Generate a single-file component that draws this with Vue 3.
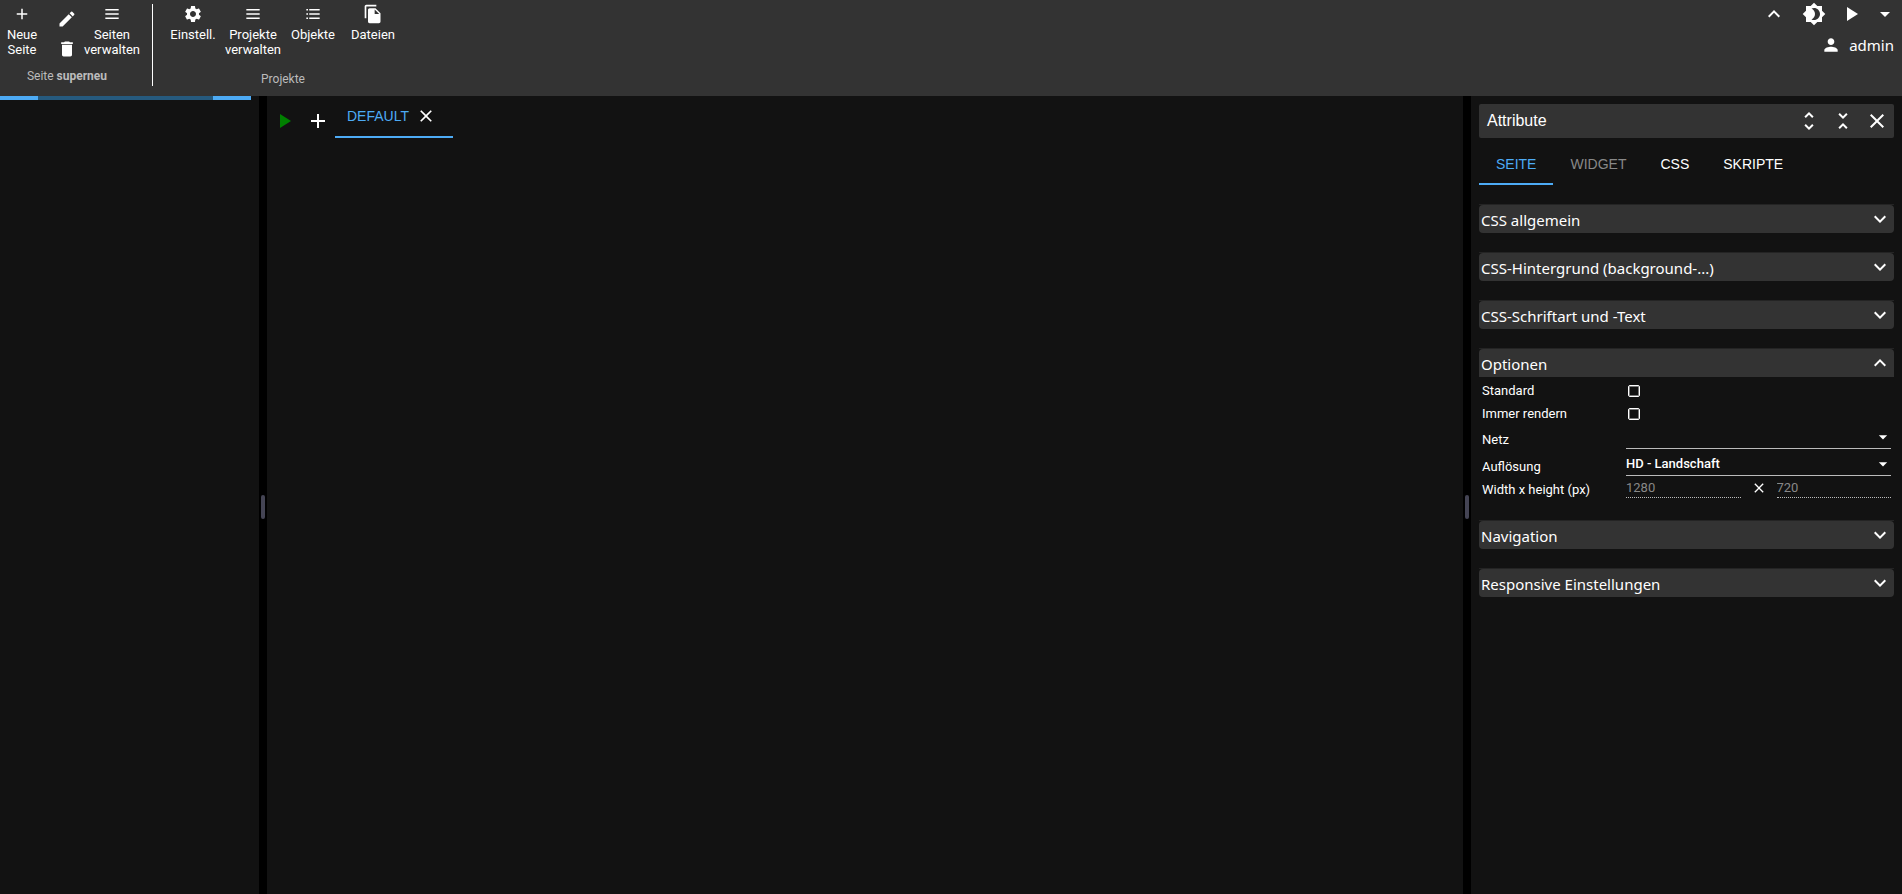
<script setup>
import { ref, reactive } from 'vue'

const icons = {
  add: 'M19 13h-6v6h-2v-6H5v-2h6V5h2v6h6v2z',
  edit: 'M3 17.25V21h3.75L17.81 9.94l-3.75-3.75L3 17.25zM20.71 7.04c.39-.39.39-1.02 0-1.41l-2.34-2.34a.9959.9959 0 0 0-1.41 0l-1.83 1.83 3.75 3.75 1.83-1.83z',
  trash: 'M6 19c0 1.1.9 2 2 2h8c1.1 0 2-.9 2-2V7H6v12zM19 4h-3.5l-1-1h-5l-1 1H5v2h14V4z',
  menu: 'M4 18h16v-1.8H4V18zm0-5.1h16v-1.8H4v1.8zM4 6v1.8h16V6H4z',
  list: 'M4 7.8h2V6H4v1.8zm0 5.1h2v-1.8H4v1.8zM4 18h2v-1.8H4V18zm3.500 0H20v-1.8H7.500V18zm0-5.1H20v-1.8H7.500v1.8zm0-6.9v1.8H20V6H7.500z',
  gear: 'M19.14 12.94c.04-.3.06-.61.06-.94 0-.32-.02-.64-.07-.94l2.03-1.58c.18-.14.23-.41.12-.61l-1.92-3.32c-.12-.22-.37-.29-.59-.22l-2.39.96c-.5-.38-1.03-.7-1.62-.94l-.36-2.54c-.04-.24-.24-.41-.48-.41h-3.84c-.24 0-.43.17-.47.41l-.36 2.54c-.59.24-1.13.57-1.62.94l-2.39-.96c-.22-.08-.47 0-.59.22L2.74 8.87c-.12.21-.08.47.12.61l2.03 1.58c-.05.3-.09.63-.09.94s.02.64.07.94l-2.03 1.58c-.18.14-.23.41-.12.61l1.92 3.32c.12.22.37.29.59.22l2.39-.96c.5.38 1.03.7 1.62.94l.36 2.54c.05.24.24.41.48.41h3.84c.24 0 .44-.17.47-.41l.36-2.54c.59-.24 1.13-.56 1.62-.94l2.39.96c.22.08.47 0 .59-.22l1.92-3.32c.12-.22.07-.47-.12-.61l-2.01-1.58zM12 15.6c-1.98 0-3.6-1.62-3.6-3.6s1.62-3.6 3.6-3.6 3.6 1.62 3.6 3.6-1.62 3.6-3.6 3.6z',
  files: 'M16 1H4c-1.1 0-2 .9-2 2v14h2V3h12V1zm-1 4 6 6v10c0 1.1-.9 2-2 2H7.99C6.89 23 6 22.1 6 21l.01-14c0-1.1.89-2 1.99-2h7zm-1 7h5.5L14 6.5V12z',
  up: 'M12 8l-6 6 1.41 1.41L12 10.83l4.59 4.58L18 14z',
  down: 'M16.59 8.59 12 13.17 7.41 8.59 6 10l6 6 6-6z',
  theme: 'M20 8.69V4h-4.69L12 .69 8.69 4H4v4.69L.69 12 4 15.31V20h4.69L12 23.31 15.31 20H20v-4.69L23.31 12 20 8.69zM12 18c-.89 0-1.74-.2-2.5-.55C11.56 16.5 13 14.42 13 12s-1.44-4.5-3.5-5.45C10.26 6.2 11.11 6 12 6c3.31 0 6 2.69 6 6s-2.69 6-6 6z',
  play: 'M8 5v14l11-7z',
  drop: 'M7 10l5 5 5-5z',
  user: 'M12 12c2.21 0 4-1.79 4-4s-1.79-4-4-4-4 1.79-4 4 1.79 4 4 4zm0 2c-2.67 0-8 1.34-8 4v2h16v-2c0-2.66-5.33-4-8-4z',
  close: 'M19 6.41 17.59 5 12 10.59 6.41 5 5 6.41 10.59 12 5 17.59 6.41 19 12 13.41 17.59 19 19 17.59 13.41 12z',
  unfoldMore: 'M12 5.83 15.17 9l1.41-1.41L12 3 7.41 7.59 8.83 9 12 5.83zm0 12.34L8.83 15l-1.41 1.41L12 21l4.59-4.59L15.17 15 12 18.17z',
  unfoldLess: 'M7.41 18.59 8.83 20 12 16.83 15.17 20l1.41-1.41L12 14l-4.59 4.59zm9.18-13.18L15.17 4 12 7.17 8.83 4 7.41 5.41 12 10l4.59-4.59z',
}

const projectTools = [
  { icon: 'gear', label: 'Einstell.' },
  { icon: 'menu', label: 'Projekte verwalten' },
  { icon: 'list', label: 'Objekte' },
  { icon: 'files', label: 'Dateien' },
]

const tabs = [
  { id: 'page', label: 'SEITE' },
  { id: 'widget', label: 'WIDGET', disabled: true },
  { id: 'css', label: 'CSS' },
  { id: 'scripts', label: 'SKRIPTE' },
]
const activeTab = ref('page')

const sections = reactive([
  { id: 'common', label: 'CSS allgemein', open: false },
  { id: 'background', label: 'CSS-Hintergrund (background-...)', open: false },
  { id: 'font', label: 'CSS-Schriftart und -Text', open: false },
  { id: 'options', label: 'Optionen', open: true },
  { id: 'navigation', label: 'Navigation', open: false },
  { id: 'responsive', label: 'Responsive Einstellungen', open: false },
])

const page = reactive({
  isDefault: false,
  alwaysRender: false,
  grid: '',
  resolution: 'hd',
  width: '1280',
  height: '720',
})

function setAll(open) {
  sections.forEach((s) => { s.open = open })
}
</script>

<template>
  <div class="editor">
    <header class="toolbar">
      <div class="group pages">
        <div class="tools">
          <button class="tool new">
            <svg class="i18" viewBox="0 0 24 24"><path :d="icons.add" /></svg>
            <span>Neue Seite</span>
          </button>
          <div class="stack">
            <button aria-label="Umbenennen"><svg class="i20" viewBox="0 0 24 24"><path :d="icons.edit" /></svg></button>
            <button aria-label="Löschen"><svg class="i20" viewBox="0 0 24 24"><path :d="icons.trash" /></svg></button>
          </div>
          <button class="tool">
            <svg class="i20" viewBox="0 0 24 24"><path :d="icons.menu" /></svg>
            <span>Seiten verwalten</span>
          </button>
        </div>
        <div class="caption">Seite <b>superneu</b></div>
      </div>
      <div class="group projects">
        <div class="tools">
          <button v-for="t in projectTools" :key="t.label" class="tool">
            <svg class="i20" viewBox="0 0 24 24"><path :d="icons[t.icon]" /></svg>
            <span>{{ t.label }}</span>
          </button>
        </div>
        <div class="caption">Projekte</div>
      </div>

      <div class="account">
        <div class="actions">
          <button class="collapse" aria-label="Einklappen"><svg viewBox="0 0 24 24"><path :d="icons.up" /></svg></button>
          <button class="theme" aria-label="Thema"><svg viewBox="0 0 24 24"><path :d="icons.theme" /></svg></button>
          <button aria-label="Starten"><svg viewBox="0 0 24 24"><path :d="icons.play" /></svg></button>
          <button aria-label="Mehr"><svg viewBox="0 0 24 24"><path :d="icons.drop" /></svg></button>
        </div>
        <div class="user">
          <svg class="i20" viewBox="0 0 24 24"><path :d="icons.user" /></svg>
          <span>admin</span>
        </div>
      </div>
    </header>

    <main class="workspace">
      <aside class="palette">
        <div class="progress"><i></i><i></i></div>
      </aside>
      <div class="gutter"><i></i></div>

      <section class="canvas">
        <div class="view-bar">
          <button class="run" aria-label="Ansicht starten"><svg viewBox="0 0 24 24"><path :d="icons.play" /></svg></button>
          <button aria-label="Ansicht öffnen"><svg viewBox="0 0 24 24"><path :d="icons.add" /></svg></button>
          <div class="view-tab">
            <button class="view-name">DEFAULT</button>
            <button aria-label="Schließen"><svg class="i20" viewBox="0 0 24 24"><path :d="icons.close" /></svg></button>
          </div>
        </div>
      </section>
      <div class="gutter"><i></i></div>

      <aside class="attributes">
        <div class="panel-title">
          <span>Attribute</span>
          <button aria-label="Alle öffnen" @click="setAll(true)"><svg viewBox="0 0 24 24"><path :d="icons.unfoldMore" /></svg></button>
          <button aria-label="Alle schließen" @click="setAll(false)"><svg viewBox="0 0 24 24"><path :d="icons.unfoldLess" /></svg></button>
          <button aria-label="Ausblenden"><svg viewBox="0 0 24 24"><path :d="icons.close" /></svg></button>
        </div>

        <nav class="tabs">
          <button v-for="t in tabs" :key="t.id" :disabled="t.disabled"
            :class="{ active: activeTab === t.id }" @click="activeTab = t.id">{{ t.label }}</button>
        </nav>

        <section v-for="s in sections" :key="s.id" class="section" :class="{ open: s.open }">
          <button class="section-head" @click="s.open = !s.open">
            <span>{{ s.label }}</span>
            <svg viewBox="0 0 24 24"><path :d="s.open ? icons.up : icons.down" /></svg>
          </button>
          <div v-if="s.open && s.id === 'options'" class="fields">
            <div class="field">
              <label for="isDefault">Standard</label>
              <input id="isDefault" v-model="page.isDefault" type="checkbox" />
            </div>
            <div class="field">
              <label for="alwaysRender">Immer rendern</label>
              <input id="alwaysRender" v-model="page.alwaysRender" type="checkbox" />
            </div>
            <div class="field line">
              <label for="grid">Netz</label>
              <div class="select">
                <select id="grid" v-model="page.grid"><option value=""></option></select>
                <svg class="i20" viewBox="0 0 24 24"><path :d="icons.drop" /></svg>
              </div>
            </div>
            <div class="field line">
              <label for="resolution">Auflösung</label>
              <div class="select">
                <select id="resolution" v-model="page.resolution"><option value="hd">HD - Landschaft</option></select>
                <svg class="i20" viewBox="0 0 24 24"><path :d="icons.drop" /></svg>
              </div>
            </div>
            <div class="field dimensions">
              <label for="width">Width x height (px)</label>
              <div class="size">
                <input id="width" v-model="page.width" type="text" disabled />
                <svg class="i16" viewBox="0 0 24 24"><path :d="icons.close" /></svg>
                <input v-model="page.height" type="text" aria-label="Height" disabled />
              </div>
            </div>
          </div>
        </section>
      </aside>
    </main>
  </div>
</template>

<style>
body {
  background: #121212;
}
</style>

<style scoped>
.editor {
  min-height: 100vh;
  display: flex;
  flex-direction: column;
  background: #121212;
  color: #fff;
  font-family: Roboto, "Liberation Sans", sans-serif;
}
.editor *, .editor { box-sizing: border-box; }

button {
  display: block;
  padding: 0;
  border: 0;
  background: none;
  color: inherit;
  font: inherit;
  cursor: pointer;
}
svg {
  display: block;
  width: 24px;
  height: 24px;
  fill: currentColor;
  flex-shrink: 0;
}
svg.i20 { width: 20px; height: 20px; }
svg.i18 { width: 18px; height: 18px; }
svg.i16 { width: 16px; height: 16px; }

.toolbar {
  display: flex;
  height: 96px;
  padding-top: 4px;
  background: #333;
}
.group {
  display: flex;
  flex-direction: column;
  justify-content: space-between;
  height: 82px;
}
.pages {
  width: 153px;
  padding-right: 12px;
  border-right: 1px solid #fff;
}
.projects { margin-left: 10px; }
.tools { display: flex; }
.tool {
  display: flex;
  flex-direction: column;
  align-items: center;
  width: 60px;
  font-size: 13px;
  line-height: 15px;
  text-align: center;
}
.tool svg { margin-bottom: 3px; }
.tool svg.i18 { margin: 1px 0 4px; }
.pages .tool { width: 56px; }
.pages .tool.new { width: 44px; padding: 0 4px; }
.stack {
  display: flex;
  flex-direction: column;
  gap: 10px;
  width: 40px;
  padding: 5px 0 0 13px;
}
.caption {
  font-size: 12px;
  line-height: 14px;
  color: #bbb;
  text-align: center;
}
.pages .caption { padding: 0 6px 3px 0; }

.account { margin-left: auto; padding-right: 5px; }
.actions {
  display: flex;
  gap: 10px;
  margin-top: -2px;
}
.collapse { margin-right: 6px; }
.theme { margin-right: 3px; }
.user {
  display: flex;
  align-items: center;
  justify-content: flex-end;
  gap: 8px;
  margin-top: 8px;
  padding-right: 3px;
  font-family: "Noto Sans", sans-serif;
  font-size: 15px;
  line-height: 22px;
}

.workspace { flex: 1; display: flex; }
.palette { width: 259px; padding-right: 8px; }
.progress {
  display: flex;
  justify-content: space-between;
  height: 4px;
  background: #265a7e;
}
.progress i { width: 38px; background: #4dabf5; }
.gutter {
  display: flex;
  align-items: center;
  justify-content: center;
  width: 8px;
  padding-top: 24px;
  background: #000;
}
.gutter i {
  width: 4px;
  height: 24px;
  border-radius: 2px;
  background: #444454;
}

.canvas { flex: 1; min-width: 0; }
.view-bar {
  display: flex;
  align-items: center;
  gap: 10px;
  height: 42px;
  padding-left: 5px;
}
.view-bar > button { margin-top: 8px; }
.run { color: #008000; }
.view-tab {
  display: flex;
  align-items: center;
  gap: 7px;
  width: 118px;
  height: 42px;
  margin-left: -5px;
  padding-left: 12px;
  border-bottom: 2px solid #4dabf5;
}
.view-name {
  color: #4dabf5;
  font-family: "Liberation Sans", sans-serif;
  font-size: 14px;
}

.attributes { width: 431px; padding: 8px; }
.panel-title {
  display: flex;
  align-items: center;
  height: 34px;
  padding: 0 5px 0 8px;
  border-radius: 2px;
  background: #333;
}
.panel-title span {
  margin-right: auto;
  font-family: "Liberation Sans", sans-serif;
  font-size: 16px;
}
.panel-title button + button { margin-left: 10px; }

.tabs {
  display: flex;
  height: 47px;
  margin-bottom: 19px;
}
.tabs button {
  padding: 6px 17px 0;
  border-bottom: 2px solid transparent;
  font-family: "Liberation Sans", sans-serif;
  font-size: 14px;
}
.tabs button:disabled { color: #888; cursor: default; }
.tabs button.active { color: #4dabf5; border-color: #4dabf5; }

.section {
  margin-bottom: 19px;
  border-top: 1px solid #242424;
}
.section-head {
  display: flex;
  align-items: center;
  justify-content: space-between;
  width: 100%;
  height: 28px;
  padding: 0 2px;
  border-radius: 4px;
  background: #333;
  font-family: "Noto Sans", sans-serif;
  font-size: 15px;
}
.section-head span { padding-top: 2px; }
.open .section-head { border-radius: 4px 4px 0 0; }

.fields {
  padding: 2px 3px;
  font-size: 13px;
}
.field {
  display: grid;
  grid-template-columns: 144px 1fr;
  align-items: center;
  height: 23px;
}
.field.line { height: 24px; }
.field.line + .line { margin-top: 3px; }
.line label, .dimensions label { padding-top: 4px; }
input[type='checkbox'] {
  appearance: none;
  width: 12px;
  height: 12px;
  margin: 0 0 0 2px;
  border: 1px solid #fff;
  border-radius: 2px;
  box-shadow: inset 0 0 0 1px #777;
}
input[type='checkbox']:checked { background: #4dabf5; }
.select { position: relative; }
.select select {
  appearance: none;
  display: block;
  width: 100%;
  height: 24px;
  padding: 0 20px 0 0;
  border: 0;
  border-bottom: 1px solid #bbb;
  border-radius: 0;
  background: transparent;
  color: #fff;
  font-family: inherit;
  font-size: 13px;
  font-weight: 500;
}
.select option { background: #333; }
.select svg {
  position: absolute;
  right: -2px;
  top: 2px;
  pointer-events: none;
}
.size {
  display: grid;
  grid-template-columns: 1fr 16px 1fr;
  gap: 10px;
  align-items: center;
}
.size input {
  width: 100%;
  height: 21px;
  padding: 0;
  border: 0;
  border-bottom: 1px dotted #bbb;
  background: transparent;
  color: #888;
  font-family: inherit;
  font-size: 13px;
}
</style>
